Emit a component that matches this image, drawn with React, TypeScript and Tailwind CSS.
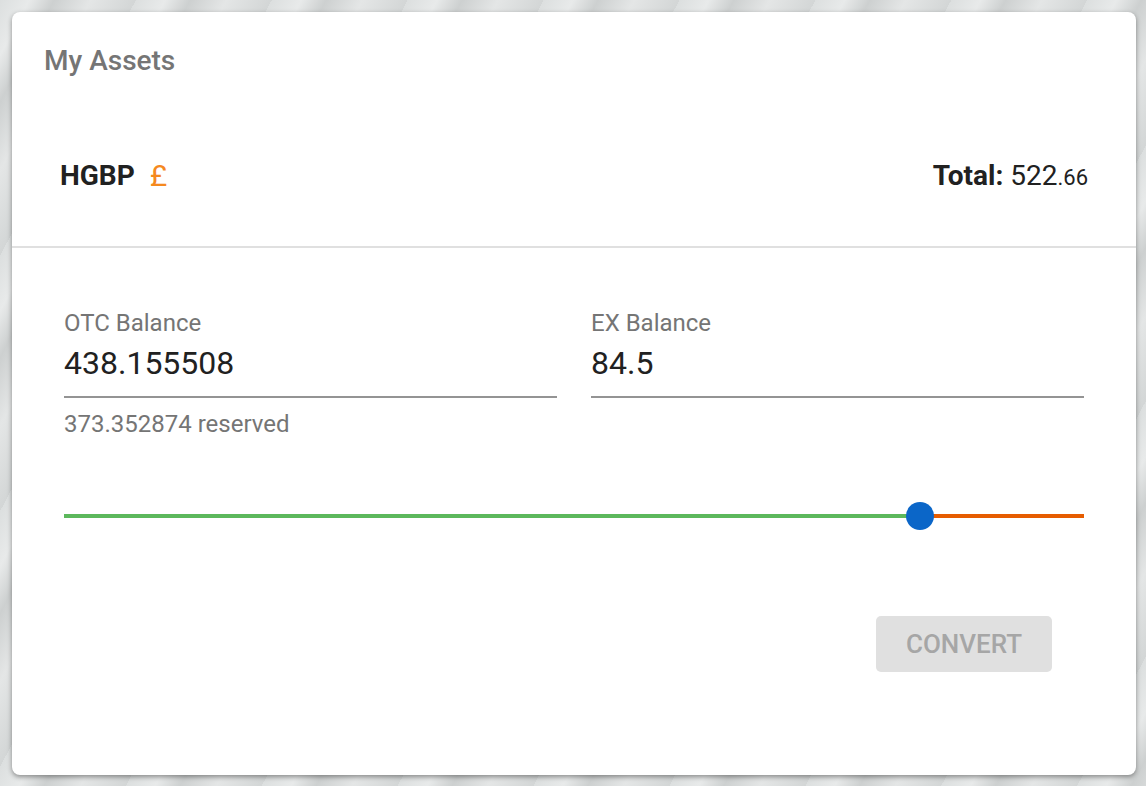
import React from "react";

export default function App() {
  const otc = 438.155508;
  const ex = 84.5;
  const pct = (otc / (otc + ex)) * 100;
  return (
    <div
      className="min-h-[786px] w-full p-[12px] bg-[repeating-linear-gradient(118deg,#dcdfdf_0px,#e8eaea_26px,#cdd0d0_48px,#e4e6e6_80px,#d3d6d6_120px)]"
      style={{ fontFamily: "Roboto, 'Liberation Sans', sans-serif" }}
    >
      <div className="w-[1124px] h-[763px] bg-white rounded-[8px] shadow-[0_2px_5px_rgba(0,0,0,0.4)] flex flex-col">
        <div className="mt-[35px] ml-[32px] text-[28px] leading-[28px] font-medium text-[#757575]">
          My Assets
        </div>
        <div className="mt-[87px] ml-[48px] mr-[48px] flex items-start justify-between h-[28px]">
          <div className="flex items-start">
            <span className="text-[28px] leading-[28px] font-bold text-[#212121]">HGBP</span>
            <span className="ml-[15px] text-[30px] leading-[28px] font-normal text-[#f5891f]">£</span>
          </div>
          <div className="text-[28px] leading-[28px] text-[#212121]">
            <span className="font-bold">Total:</span> 522<span className="text-[22px]">.66</span>
          </div>
        </div>
        <div className="mt-[56px] h-[2px] bg-[#e0e0e0]" />
        <div className="mx-[52px] mt-[63px] flex gap-[34px]">
          <div className="flex-1">
            <div className="text-[24px] leading-[24px] text-[#757575]">OTC Balance</div>
            <div className="mt-[12px] text-[32px] leading-[32px] text-[#212121]">438.155508</div>
            <div className="mt-[17px] h-[2px] bg-[#949494]" />
            <div className="mt-[14px] text-[24px] leading-[24px] text-[#757575]">373.352874 reserved</div>
          </div>
          <div className="flex-1">
            <div className="text-[24px] leading-[24px] text-[#757575]">EX Balance</div>
            <div className="mt-[12px] text-[32px] leading-[32px] text-[#212121]">84.5</div>
            <div className="mt-[17px] h-[2px] bg-[#949494]" />
          </div>
        </div>
        <div className="mx-[52px] mt-[66px] relative h-[28px] flex items-center">
          <div className="flex w-full h-[4px]">
            <div className="h-full bg-[#5cb85c]" style={{ width: `${pct}%` }} />
            <div className="h-full flex-1 bg-[#e65c00]" />
          </div>
          <div
            className="absolute top-0 w-[28px] h-[28px] rounded-full bg-[#0b66c8] -translate-x-1/2"
            style={{ left: `calc(${pct}% + 1px)` }}
          />
        </div>
        <div className="mt-[86px] mr-[84px] flex justify-end">
          <button className="w-[176px] h-[56px] rounded-[5px] bg-[#e0e0e0] text-[#a6a6a6] text-[26px] font-medium">
            CONVERT
          </button>
        </div>
      </div>
    </div>
  );
}
